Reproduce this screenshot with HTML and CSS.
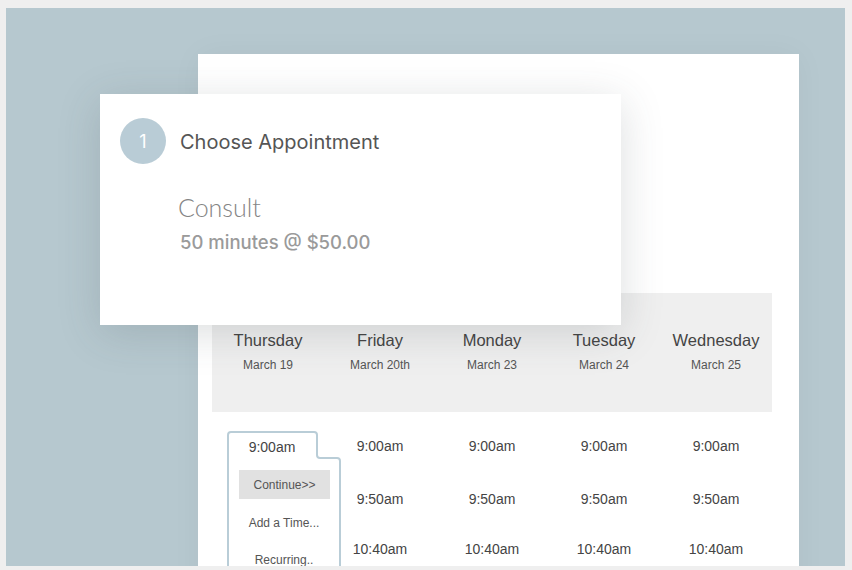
FILE: index.html
```html
<!DOCTYPE html>
<html>
<head>
<meta charset="utf-8">
<link rel="stylesheet" href="styles.css">
</head>
<body>
<div class="panel">
  <div class="sheet">
    <div class="days">
      <div class="day"><div class="dname">Thursday</div><div class="ddate">March 19</div></div>
      <div class="day"><div class="dname">Friday</div><div class="ddate">March 20th</div></div>
      <div class="day"><div class="dname">Monday</div><div class="ddate">March 23</div></div>
      <div class="day"><div class="dname">Tuesday</div><div class="ddate">March 24</div></div>
      <div class="day"><div class="dname">Wednesday</div><div class="ddate">March 25</div></div>
    </div>
    <div class="times">
      <div class="col first">
        <div class="picker">
          <svg class="outline" width="116" height="150" viewBox="0 0 116 150">
            <path d="M1 150 V4 Q1 1 4 1 H87 Q90 1 90 4 V24 Q90 27 93 27 H110 Q113 27 113 30 V150" fill="none" stroke="#b9cdd7" stroke-width="2"/>
          </svg>
          <div class="ptime">9:00am</div>
          <div class="pbtn">Continue&gt;&gt;</div>
          <div class="popt">Add a Time...</div>
          <div class="popt rec">Recurring..</div>
        </div>
      </div>
      <div class="col"><div class="t">9:00am</div><div class="t">9:50am</div><div class="t">10:40am</div></div>
      <div class="col"><div class="t">9:00am</div><div class="t">9:50am</div><div class="t">10:40am</div></div>
      <div class="col"><div class="t">9:00am</div><div class="t">9:50am</div><div class="t">10:40am</div></div>
      <div class="col"><div class="t">9:00am</div><div class="t">9:50am</div><div class="t">10:40am</div></div>
    </div>
  </div>
  <div class="overlay">
    <div class="step">
      <div class="circle">1</div>
      <div class="steptitle">Choose Appointment</div>
    </div>
    <div class="svc">Consult</div>
    <div class="svcinfo">50 minutes @ $50.00</div>
  </div>
</div>
</body>
</html>
```
FILE: styles.css
```css
html, body {
  margin: 0;
  padding: 0;
  background: #efefef;
  font-family: "Liberation Sans", Arial, sans-serif;
}
.panel {
  position: relative;
  margin: 8px 7px 0 6px;
  height: 558px;
  background: #b6c8cf;
  overflow: hidden;
}
.sheet {
  margin-left: 192px;
  margin-top: 46px;
  width: 601px;
  height: 600px;
  background: #fff;
  padding: 239px 27px 0 14px;
  box-sizing: border-box;
  box-shadow: 0 0 30px rgba(0,0,0,0.04);
}
.days {
  display: grid;
  grid-template-columns: repeat(5, 112px);
  height: 119px;
  background: #efefef;
}
.day {
  text-align: center;
  padding-top: 37px;
}
.dname {
  font-size: 16.5px;
  color: #444;
  line-height: 20px;
}
.ddate {
  font-size: 12px;
  color: #555;
  margin-top: 8px;
  line-height: 14px;
}
.times {
  display: grid;
  grid-template-columns: repeat(5, 112px);
  padding-top: 19px;
}
.col {
  display: flex;
  flex-direction: column;
  align-items: center;
}
.col .t {
  font-size: 14px;
  color: #444;
  line-height: 18px;
  margin-top: 6px;
}
.col .t + .t {
  margin-top: 35px;
}
.col .t + .t + .t {
  margin-top: 32px;
}
.col.first {
  align-items: flex-start;
}
.picker {
  position: relative;
  margin-left: 15px;
  width: 116px;
  height: 150px;
}
.outline {
  position: absolute;
  left: 0;
  top: 0;
}
.ptime {
  width: 90px;
  text-align: center;
  font-size: 14px;
  color: #444;
  line-height: 18px;
  padding-top: 7px;
}
.pbtn {
  margin: 14px 0 0 12px;
  width: 91px;
  height: 29px;
  background: #e1e1e1;
  font-size: 12px;
  color: #555;
  line-height: 31px;
  text-align: center;
}
.popt {
  width: 114px;
  text-align: center;
  font-size: 12px;
  color: #555;
  line-height: 16px;
  margin-top: 16px;
}
.popt.rec {
  margin-top: 21px;
}
.overlay {
  position: absolute;
  left: 94px;
  top: 86px;
  width: 521px;
  height: 231px;
  background: #fff;
  box-shadow: 0 8px 40px rgba(60,70,80,0.18);
  padding: 24px 0 0 20px;
  box-sizing: border-box;
}
.step {
  display: flex;
  align-items: center;
}
.circle {
  width: 46px;
  height: 46px;
  border-radius: 50%;
  background: #b9ccd6;
  color: #fff;
  font-family: "Inter", sans-serif;
  font-size: 18px;
  display: flex;
  align-items: center;
  justify-content: center;
}
.steptitle {
  margin-left: 14px;
  margin-top: 2px;
  font-family: "Inter", sans-serif;
  font-size: 20px;
  color: #555;
}
.svc {
  margin: 28px 0 0 58px;
  font-family: "Lato", sans-serif;
  font-weight: 300;
  font-size: 25px;
  color: #858585;
  line-height: 30px;
}
.svcinfo {
  margin: 9px 0 0 60px;
  font-family: "Inter", sans-serif;
  font-weight: 500;
  font-size: 18.5px;
  color: #9a9a9a;
  line-height: 22px;
}
```
